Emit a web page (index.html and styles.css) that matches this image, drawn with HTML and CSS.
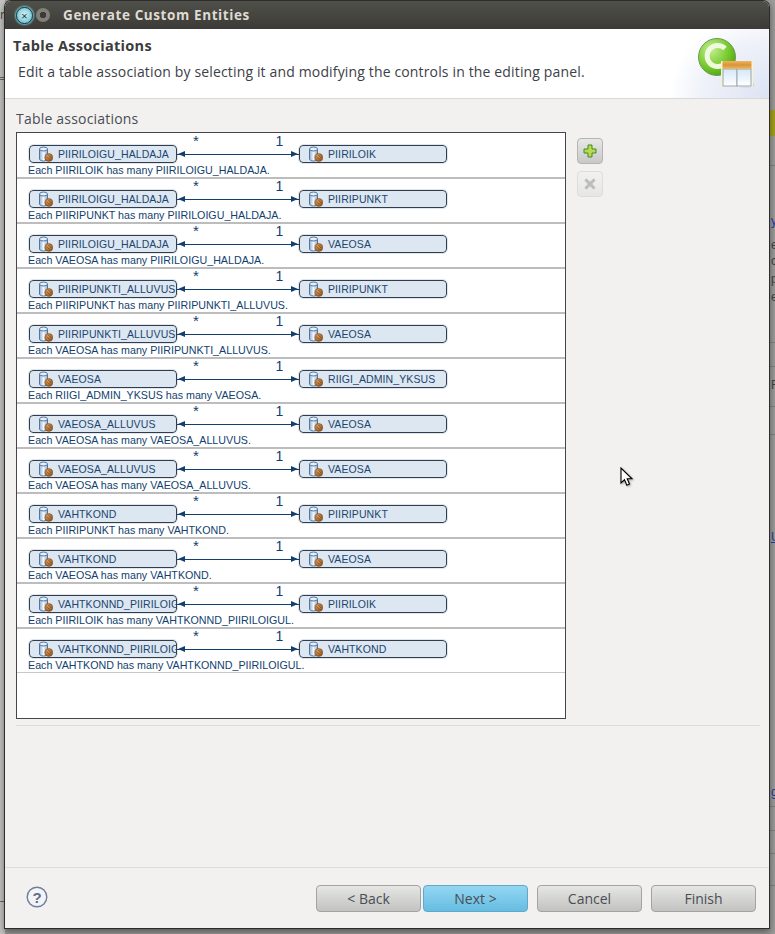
FILE: index.html
```html
<!DOCTYPE html>
<html lang="en">
<head>
  <meta charset="UTF-8">
  <title>Generate Custom Entities</title>
  <link rel="stylesheet" href="styles.css">
</head>
<body>

  <svg class="defs" width="0" height="0">
    <defs>
      <linearGradient id="can" x1="0" x2="1" y1="0" y2="0">
        <stop offset="0" stop-color="#8fb0d4"/>
        <stop offset="0.5" stop-color="#f2f7fc"/>
        <stop offset="1" stop-color="#8fb0d4"/>
      </linearGradient>
      <radialGradient id="nut" cx="0.4" cy="0.35" r="0.7">
        <stop offset="0" stop-color="#e0a060"/>
        <stop offset="1" stop-color="#8a4f1c"/>
      </radialGradient>
      <symbol id="tableIcon" viewBox="0 0 16 16">
        <path d="M2.500 3v10c0 1 1.500 2 4 2s4-1 4-2V3" fill="url(#can)" stroke="#4f749f"/>
        <ellipse cx="6.500" cy="3" rx="4" ry="2" fill="#e6eff8" stroke="#4f749f"/>
        <circle cx="11.800" cy="11.500" r="4" fill="url(#nut)" stroke="#7a5226" stroke-width="0.500"/>
        <path d="M9.800 10.500l3 3M11.300 9l3 3" stroke="#6b3e14" stroke-width="0.700"/>
      </symbol>
    </defs>
  </svg>

  <div class="backdrop">
    <span class="scrap scrap-left-text">n</span>
    <div class="scrap scrap-rule-left scrap-top-77"></div>
    <div class="scrap scrap-rule-left scrap-top-79"></div>
    <div class="scrap scrap-rule-left scrap-top-901"></div>
    <div class="scrap scrap-olive"></div>
    <div class="scrap scrap-rule scrap-top-165"></div>
    <div class="scrap scrap-rule scrap-top-342"></div>
    <div class="scrap scrap-rule scrap-top-366"></div>
    <div class="scrap scrap-rule scrap-top-406"></div>
    <div class="scrap scrap-rule scrap-top-434"></div>
    <div class="scrap scrap-rule scrap-top-806"></div>
    <div class="scrap scrap-rule scrap-top-830"></div>
    <div class="scrap scrap-rule scrap-top-853"></div>
    <div class="scrap scrap-rule scrap-top-885"></div>
    <span class="scrap scrap-link scrap-top-214">y!</span>
    <span class="scrap scrap-text scrap-top-238">e</span>
    <span class="scrap scrap-text scrap-top-254">c</span>
    <span class="scrap scrap-text scrap-top-272">p</span>
    <span class="scrap scrap-text scrap-top-290">e</span>
    <span class="scrap scrap-text scrap-top-378">F</span>
    <span class="scrap scrap-link scrap-top-530">U</span>
    <span class="scrap scrap-link scrap-top-785">g</span>
  </div>

  <div class="window">
    <div class="titlebar">
      <div class="win-close">×</div>
      <div class="win-max"></div>
      <div class="win-title">Generate Custom Entities</div>
    </div>

    <div class="banner">
      <div class="banner-text">
        <h2>Table Associations</h2>
        <p>Edit a table association by selecting it and modifying the controls in the editing panel.</p>
      </div>
      <svg class="banner-logo" width="60" height="60" viewBox="0 0 60 60">
        <defs>
          <radialGradient id="ball" cx="0.35" cy="0.3" r="0.8">
            <stop offset="0" stop-color="#c4ee90"/>
            <stop offset="0.6" stop-color="#74c92a"/>
            <stop offset="1" stop-color="#4b9a14"/>
          </radialGradient>
          <linearGradient id="pane" x1="0" x2="0" y1="0" y2="1">
            <stop offset="0" stop-color="#d3e8f8"/>
            <stop offset="1" stop-color="#ffffff"/>
          </linearGradient>
          <linearGradient id="lid" x1="0" x2="0" y1="0" y2="1">
            <stop offset="0" stop-color="#f0b45c"/>
            <stop offset="0.5" stop-color="#d99438"/>
            <stop offset="1" stop-color="#edb768"/>
          </linearGradient>
        </defs>
        <circle cx="23" cy="22" r="18.500" fill="url(#ball)" stroke="#6f9a58"/>
        <path d="M31 13.500a10.500 10.500 0 1 0 0 15" fill="none" stroke="#eef9e0" stroke-width="5"/>
        <ellipse cx="52" cy="50" rx="11" ry="2.500" fill="#c3c8d4" opacity="0.7"/>
        <rect x="27" y="26" width="32" height="26" fill="#f8f3cf"/>
        <rect x="29" y="34" width="14" height="17" fill="url(#pane)" stroke="#9aa6b4"/>
        <rect x="43" y="34" width="14" height="17" fill="url(#pane)" stroke="#9aa6b4"/>
        <rect x="28.500" y="26" width="29" height="8" fill="url(#lid)"/>
      </svg>
    </div>

    <div class="content">
      <div class="field-label">Table associations</div>
      <div class="assoc-area">
        <div class="assoc-list">

          <div class="assoc-row">
            <div class="assoc-marks"><span class="mark-many">*</span><span class="mark-one">1</span></div>
            <div class="assoc-line">
              <div class="table-box"><svg class="table-icon"><use href="#tableIcon"/></svg><span class="table-name">PIIRILOIGU_HALDAJA</span></div>
              <div class="arrow"></div>
              <div class="table-box"><svg class="table-icon"><use href="#tableIcon"/></svg><span class="table-name">PIIRILOIK</span></div>
            </div>
            <div class="assoc-caption">Each PIIRILOIK has many PIIRILOIGU_HALDAJA.</div>
          </div>

          <div class="assoc-row">
            <div class="assoc-marks"><span class="mark-many">*</span><span class="mark-one">1</span></div>
            <div class="assoc-line">
              <div class="table-box"><svg class="table-icon"><use href="#tableIcon"/></svg><span class="table-name">PIIRILOIGU_HALDAJA</span></div>
              <div class="arrow"></div>
              <div class="table-box"><svg class="table-icon"><use href="#tableIcon"/></svg><span class="table-name">PIIRIPUNKT</span></div>
            </div>
            <div class="assoc-caption">Each PIIRIPUNKT has many PIIRILOIGU_HALDAJA.</div>
          </div>

          <div class="assoc-row">
            <div class="assoc-marks"><span class="mark-many">*</span><span class="mark-one">1</span></div>
            <div class="assoc-line">
              <div class="table-box"><svg class="table-icon"><use href="#tableIcon"/></svg><span class="table-name">PIIRILOIGU_HALDAJA</span></div>
              <div class="arrow"></div>
              <div class="table-box"><svg class="table-icon"><use href="#tableIcon"/></svg><span class="table-name">VAEOSA</span></div>
            </div>
            <div class="assoc-caption">Each VAEOSA has many PIIRILOIGU_HALDAJA.</div>
          </div>

          <div class="assoc-row">
            <div class="assoc-marks"><span class="mark-many">*</span><span class="mark-one">1</span></div>
            <div class="assoc-line">
              <div class="table-box"><svg class="table-icon"><use href="#tableIcon"/></svg><span class="table-name">PIIRIPUNKTI_ALLUVUS</span></div>
              <div class="arrow"></div>
              <div class="table-box"><svg class="table-icon"><use href="#tableIcon"/></svg><span class="table-name">PIIRIPUNKT</span></div>
            </div>
            <div class="assoc-caption">Each PIIRIPUNKT has many PIIRIPUNKTI_ALLUVUS.</div>
          </div>

          <div class="assoc-row">
            <div class="assoc-marks"><span class="mark-many">*</span><span class="mark-one">1</span></div>
            <div class="assoc-line">
              <div class="table-box"><svg class="table-icon"><use href="#tableIcon"/></svg><span class="table-name">PIIRIPUNKTI_ALLUVUS</span></div>
              <div class="arrow"></div>
              <div class="table-box"><svg class="table-icon"><use href="#tableIcon"/></svg><span class="table-name">VAEOSA</span></div>
            </div>
            <div class="assoc-caption">Each VAEOSA has many PIIRIPUNKTI_ALLUVUS.</div>
          </div>

          <div class="assoc-row">
            <div class="assoc-marks"><span class="mark-many">*</span><span class="mark-one">1</span></div>
            <div class="assoc-line">
              <div class="table-box"><svg class="table-icon"><use href="#tableIcon"/></svg><span class="table-name">VAEOSA</span></div>
              <div class="arrow"></div>
              <div class="table-box"><svg class="table-icon"><use href="#tableIcon"/></svg><span class="table-name">RIIGI_ADMIN_YKSUS</span></div>
            </div>
            <div class="assoc-caption">Each RIIGI_ADMIN_YKSUS has many VAEOSA.</div>
          </div>

          <div class="assoc-row">
            <div class="assoc-marks"><span class="mark-many">*</span><span class="mark-one">1</span></div>
            <div class="assoc-line">
              <div class="table-box"><svg class="table-icon"><use href="#tableIcon"/></svg><span class="table-name">VAEOSA_ALLUVUS</span></div>
              <div class="arrow"></div>
              <div class="table-box"><svg class="table-icon"><use href="#tableIcon"/></svg><span class="table-name">VAEOSA</span></div>
            </div>
            <div class="assoc-caption">Each VAEOSA has many VAEOSA_ALLUVUS.</div>
          </div>

          <div class="assoc-row">
            <div class="assoc-marks"><span class="mark-many">*</span><span class="mark-one">1</span></div>
            <div class="assoc-line">
              <div class="table-box"><svg class="table-icon"><use href="#tableIcon"/></svg><span class="table-name">VAEOSA_ALLUVUS</span></div>
              <div class="arrow"></div>
              <div class="table-box"><svg class="table-icon"><use href="#tableIcon"/></svg><span class="table-name">VAEOSA</span></div>
            </div>
            <div class="assoc-caption">Each VAEOSA has many VAEOSA_ALLUVUS.</div>
          </div>

          <div class="assoc-row">
            <div class="assoc-marks"><span class="mark-many">*</span><span class="mark-one">1</span></div>
            <div class="assoc-line">
              <div class="table-box"><svg class="table-icon"><use href="#tableIcon"/></svg><span class="table-name">VAHTKOND</span></div>
              <div class="arrow"></div>
              <div class="table-box"><svg class="table-icon"><use href="#tableIcon"/></svg><span class="table-name">PIIRIPUNKT</span></div>
            </div>
            <div class="assoc-caption">Each PIIRIPUNKT has many VAHTKOND.</div>
          </div>

          <div class="assoc-row">
            <div class="assoc-marks"><span class="mark-many">*</span><span class="mark-one">1</span></div>
            <div class="assoc-line">
              <div class="table-box"><svg class="table-icon"><use href="#tableIcon"/></svg><span class="table-name">VAHTKOND</span></div>
              <div class="arrow"></div>
              <div class="table-box"><svg class="table-icon"><use href="#tableIcon"/></svg><span class="table-name">VAEOSA</span></div>
            </div>
            <div class="assoc-caption">Each VAEOSA has many VAHTKOND.</div>
          </div>

          <div class="assoc-row">
            <div class="assoc-marks"><span class="mark-many">*</span><span class="mark-one">1</span></div>
            <div class="assoc-line">
              <div class="table-box"><svg class="table-icon"><use href="#tableIcon"/></svg><span class="table-name">VAHTKONND_PIIRILOIGUL</span></div>
              <div class="arrow"></div>
              <div class="table-box"><svg class="table-icon"><use href="#tableIcon"/></svg><span class="table-name">PIIRILOIK</span></div>
            </div>
            <div class="assoc-caption">Each PIIRILOIK has many VAHTKONND_PIIRILOIGUL.</div>
          </div>

          <div class="assoc-row assoc-row-last">
            <div class="assoc-marks"><span class="mark-many">*</span><span class="mark-one">1</span></div>
            <div class="assoc-line">
              <div class="table-box"><svg class="table-icon"><use href="#tableIcon"/></svg><span class="table-name">VAHTKONND_PIIRILOIGUL</span></div>
              <div class="arrow"></div>
              <div class="table-box"><svg class="table-icon"><use href="#tableIcon"/></svg><span class="table-name">VAHTKOND</span></div>
            </div>
            <div class="assoc-caption">Each VAHTKOND has many VAHTKONND_PIIRILOIGUL.</div>
          </div>

        </div>

        <div class="side-buttons">
          <button class="icon-btn">
            <svg width="14" height="14" viewBox="0 0 14 14"><path d="M5 1h4v4h4v4H9v4H5V9H1V5h4z" fill="#bcd94e" stroke="#3f8a2c"/></svg>
          </button>
          <button class="icon-btn icon-btn-off">
            <svg width="14" height="14" viewBox="0 0 14 14"><path d="M1.500 3.500l2-2L7 5l3.500-3.500 2 2L9 7l3.500 3.500-2 2L7 9l-3.500 3.500-2-2L5 7z" fill="#bdbdbd" stroke="#c9c9c9" stroke-width="0.500"/></svg>
          </button>
        </div>
      </div>
      <div class="content-rule"></div>
    </div>

    <div class="footer">
      <svg class="help" width="22" height="22" viewBox="0 0 22 22">
        <circle cx="11" cy="11" r="9.800" fill="#f4f4f6" stroke="#6d7f9e" stroke-width="1.400"/>
        <text x="11" y="16.500" text-anchor="middle" class="help-mark">?</text>
      </svg>
      <div class="wizard-buttons">
        <button class="wizard-btn">&lt; Back</button>
        <button class="wizard-btn wizard-btn-default">Next &gt;</button>
        <button class="wizard-btn wizard-btn-gap">Cancel</button>
        <button class="wizard-btn wizard-btn-gap">Finish</button>
      </div>
    </div>
  </div>

  <svg class="cursor" width="14" height="20" viewBox="0 0 14 20">
    <path d="M1 1v15l3.500-3.200 2.300 5.400 2.700-1.200-2.300-5.200h4.800z" fill="#fff" stroke="#000" stroke-width="1.100"/>
  </svg>

</body>
</html>
```

FILE: styles.css
```css
body {
  margin: 0;
  width: 775px;
  height: 934px;
  overflow: hidden;
  position: relative;
  background: #b9b9b6;
  font-family: "Open Sans", sans-serif;
  color: #3c3c3c;
}

.defs {
  position: absolute;
}

/* bits of the desktop showing around the dialog */
.backdrop {
  position: absolute;
  top: 0;
  left: 0;
  width: 775px;
  height: 934px;
  background: linear-gradient(to right, #c4c4c2 0, #c4c4c2 5px, #9c9c9a 5px);
  overflow: hidden;
}

.scrap {
  position: absolute;
}

.scrap-left-text {
  left: 0;
  top: 6px;
  font-size: 12px;
  color: #444;
}

.scrap-rule-left {
  left: 0;
  width: 5px;
  height: 1px;
  background: #666;
}

.scrap-olive {
  left: 770px;
  top: 110px;
  width: 5px;
  height: 26px;
  background: #a3a21c;
}

.scrap-rule {
  left: 770px;
  width: 5px;
  height: 1px;
  background: #7d8488;
}

.scrap-link,
.scrap-text {
  left: 771px;
  font-family: "Liberation Sans", sans-serif;
  font-size: 12px;
}

.scrap-link {
  color: #2338a8;
  text-decoration: underline;
}

.scrap-text {
  color: #444;
}

.scrap-top-77 { top: 77px; }
.scrap-top-79 { top: 79px; }
.scrap-top-165 { top: 165px; }
.scrap-top-214 { top: 214px; }
.scrap-top-238 { top: 238px; }
.scrap-top-254 { top: 254px; }
.scrap-top-272 { top: 272px; }
.scrap-top-290 { top: 290px; }
.scrap-top-342 { top: 342px; }
.scrap-top-366 { top: 366px; }
.scrap-top-378 { top: 378px; }
.scrap-top-406 { top: 406px; }
.scrap-top-434 { top: 434px; }
.scrap-top-530 { top: 530px; }
.scrap-top-785 { top: 785px; }
.scrap-top-806 { top: 806px; }
.scrap-top-830 { top: 830px; }
.scrap-top-853 { top: 853px; }
.scrap-top-885 { top: 885px; }
.scrap-top-901 { top: 901px; }

.window {
  position: absolute;
  left: 5px;
  top: 1px;
  width: 764px;
  height: 927px;
  display: flex;
  flex-direction: column;
  background: #f2f1f0;
  border-radius: 6px 6px 0 0;
  box-shadow: 0 0 0 1px #2e2d2b, 0 3px 7px 1px rgba(0, 0, 0, 0.45);
  overflow: hidden;
}

.titlebar {
  height: 28px;
  flex: none;
  display: flex;
  align-items: center;
  padding-left: 11px;
  background: linear-gradient(to bottom, #50504a, #3c3b37);
}

.win-close {
  width: 15px;
  height: 15px;
  border-radius: 50%;
  border: 1px solid #1c4a54;
  background: radial-gradient(circle at 50% 45%, #d4f2f6, #55b8c8);
  box-shadow: 0 0 2px 1px #7cc6d2;
  color: #234;
  font-size: 11px;
  line-height: 15px;
  text-align: center;
}

.win-max {
  width: 14px;
  height: 14px;
  margin-left: 3px;
  border-radius: 50%;
  background: #6b6a66 radial-gradient(circle, #3c3b37 0 3px, #807f7a 3.500px);
}

.win-title {
  margin-left: 13px;
  font-size: 13.500px;
  font-weight: 700;
  letter-spacing: 0.600px;
  color: #dfdbd2;
}

.banner {
  height: 69px;
  flex: none;
  display: flex;
  justify-content: space-between;
  background: radial-gradient(ellipse 100px 85px at 100% 100%, #dce3f3 0, #eef1f9 65%, #fff 100%);
  border-bottom: 1px solid #d8d8d6;
}

.banner-text h2 {
  margin: 7px 0 0 8px;
  font-size: 14.500px;
  font-weight: 700;
  line-height: 19px;
  letter-spacing: 0.300px;
  color: #3c3c3c;
}

.banner-text p {
  margin: 7px 0 0 13px;
  font-size: 14px;
  line-height: 19px;
  letter-spacing: 0.150px;
  color: #3c4048;
}

.banner-logo {
  margin: 6px 15px 0 0;
}

.content {
  flex: 1;
  padding: 10px 9px 0 11px;
}

.field-label {
  font-size: 14px;
  line-height: 19px;
  letter-spacing: 0.200px;
  color: #4a4d55;
}

.assoc-area {
  display: flex;
  gap: 11px;
  margin-top: 4px;
}

.assoc-list {
  width: 548px;
  height: 584px;
  padding-top: 1px;
  background: #fff;
  border: 1px solid #45454a;
}

.assoc-row {
  height: 45px;
  box-sizing: border-box;
  border-bottom: 2px solid #bdbdbd;
  font-family: "Liberation Sans", sans-serif;
  color: #123f6e;
}

.assoc-row-last {
  height: 44px;
  border-bottom-width: 1px;
  border-bottom-color: #c8c8c8;
}

.assoc-marks {
  height: 11px;
  position: relative;
  font-size: 14px;
  line-height: 12px;
}

.mark-many {
  position: absolute;
  left: 176px;
  top: 1px;
  font-size: 15px;
}

.mark-one {
  position: absolute;
  left: 258.400px;
  top: 1px;
}

.assoc-line {
  display: flex;
  align-items: center;
  padding-left: 12px;
}

.table-box {
  width: 148px;
  height: 18px;
  flex: none;
  box-sizing: border-box;
  display: flex;
  align-items: center;
  padding-left: 7px;
  background: #dce7f1;
  border: 1px solid #333c48;
  border-radius: 4px;
  outline: 1px solid #dce7f1;
  overflow: hidden;
  white-space: nowrap;
}

.table-icon {
  width: 16px;
  height: 16px;
  flex: none;
}

.table-name {
  margin-left: 5px;
  font-size: 10.500px;
  color: #1c4570;
  letter-spacing: 0.100px;
}

.arrow {
  width: 122px;
  flex: none;
  height: 1px;
  position: relative;
  background: #123f6e;
}

.arrow::before,
.arrow::after {
  content: "";
  position: absolute;
  top: -3px;
  border-top: 3.500px solid transparent;
  border-bottom: 3.500px solid transparent;
}

.arrow::before {
  left: 1px;
  border-right: 7px solid #123f6e;
}

.arrow::after {
  right: 1px;
  border-left: 7px solid #123f6e;
}

.assoc-caption {
  margin: 1px 0 0 11px;
  font-size: 10.700px;
  line-height: 12px;
}

.side-buttons {
  display: flex;
  flex-direction: column;
  gap: 7px;
  padding-top: 6px;
}

.icon-btn {
  width: 26px;
  height: 26px;
  padding: 0;
  display: flex;
  align-items: center;
  justify-content: center;
  border: 1px solid #b4b4b2;
  border-radius: 4px;
  background: linear-gradient(to bottom, #e8e8e6, #c8c8c6);
}

.icon-btn-off {
  border-color: #dcdcda;
  background: linear-gradient(to bottom, #f2f1f0, #e6e6e4);
}

.content-rule {
  height: 1px;
  margin-top: 6px;
  background: #dcdcda;
}

.footer {
  height: 61px;
  box-sizing: border-box;
  flex: none;
  display: flex;
  align-items: flex-start;
  justify-content: space-between;
  border-top: 1px solid #dcdcda;
  padding: 17px 13px 0 21px;
}

.help {
  margin-top: 1px;
}

.help-mark {
  font-family: "Liberation Sans", sans-serif;
  font-size: 15px;
  font-weight: 700;
  fill: #5d6f90;
}

.wizard-buttons {
  display: flex;
  gap: 2px;
}

.wizard-btn {
  width: 105px;
  height: 27px;
  padding: 0;
  border: 1px solid #a3a3a1;
  border-radius: 4px;
  background: linear-gradient(to bottom, #e6e6e4, #c2c2c0);
  font-family: "Open Sans", sans-serif;
  font-size: 14px;
  color: #4a4d55;
}

.wizard-btn-default {
  border-color: #5fa8c8;
  background: linear-gradient(to bottom, #93d6f2, #66bde2);
}

.wizard-btn-gap {
  margin-left: 7px;
}

.cursor {
  position: absolute;
  left: 620px;
  top: 467px;
  filter: drop-shadow(1px 1px 1px rgba(0, 0, 0, 0.3));
}
```
